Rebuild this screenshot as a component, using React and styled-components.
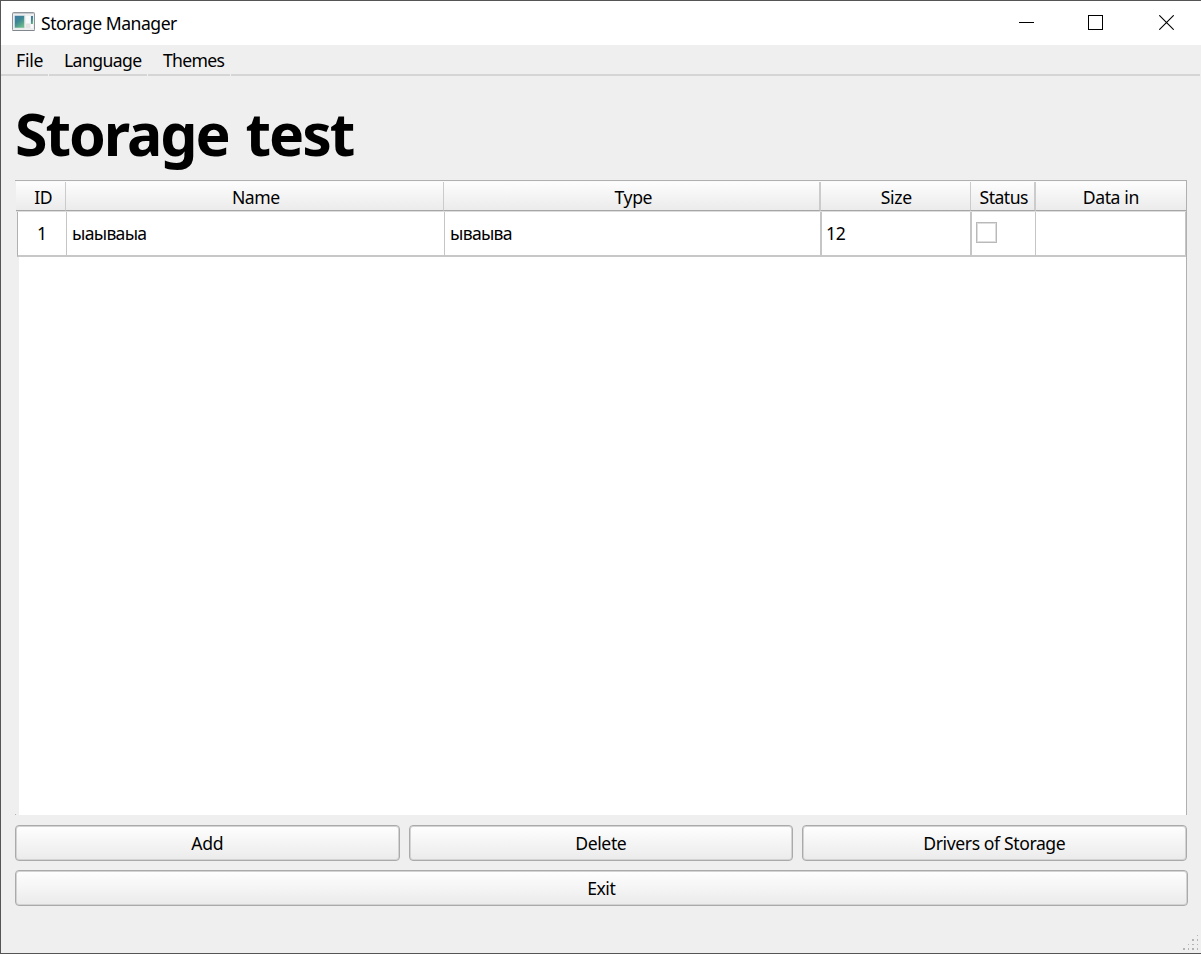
import React from 'react';
import styled, { createGlobalStyle } from 'styled-components';

const Global = createGlobalStyle`
  * { box-sizing: border-box; }
  html, body { margin: 0; background: #efefef; overflow: hidden; }
  body { font: 17.6px/24px "Noto Sans", "Open Sans", sans-serif; color: #000; }
`;

const Window = styled.div`
  width: 1201px;
  height: 954px;
  display: flex;
  flex-direction: column;
  background: #efefef;
  border: 1px solid #555;
  border-right-width: 0;
`;

const Label = styled.span`
  display: inline-block;
  white-space: nowrap;
  letter-spacing: ${(p) => p.$track || 0}px;
  margin-right: ${(p) => -(p.$track || 0)}px;
`;

const TitleBar = styled.header`
  height: 44px;
  flex: none;
  display: flex;
  align-items: flex-start;
  padding: 10px 27px 0 11px;
  background: #fff;
`;

const Caption = styled.div`
  flex: 1;
  padding-left: 6px;
`;

const Controls = styled.div`
  display: flex;
  gap: 54px;
  padding-top: 4px;
  svg { display: block; }
  svg:last-child { margin-left: 2px; }
`;

const MenuBar = styled.nav`
  display: flex;
  flex: none;
  height: 31px;
  gap: 1px;
  margin-right: 1px;
`;

const MenuItem = styled.div`
  width: ${(p) => p.$w}px;
  flex: ${(p) => (p.$w ? 'none' : 1)};
  padding: 3px 0 0 ${(p) => p.$pad || 0}px;
  border-bottom: 2px solid #d5d5d5;
`;

const Content = styled.main`
  width: 1173px;
  margin-left: 14px;
  display: flex;
  flex-direction: column;
`;

const Heading = styled.h1`
  height: 104px;
  margin: 0;
  padding-top: 17px;
  font-size: 59px;
  line-height: 80px;
  font-weight: 700;
  word-spacing: 3.5px;
`;

const Table = styled.section`
  width: 1172px;
  height: 635px;
  border-top: 1px solid #b0b0b0;
  border-right: 1px solid #b0b0b0;
`;

const HeaderRow = styled.div`
  display: flex;
  height: 31px;
  padding-top: 1px;
  margin-left: 1px;
  border-bottom: 1px solid #ddd;
  background: #fafafa;
`;

const HeaderCell = styled.div`
  width: ${(p) => p.$w}px;
  padding-top: 3px;
  padding-left: ${(p) => p.$shift || 0}px;
  text-align: center;
  border-right: ${(p) => p.$line}px solid #cbcbcb;
  border-bottom: 1px solid #a6a6a6;
  background: linear-gradient(#fdfdfd, #ebebeb);
`;

const Row = styled.div`
  display: flex;
  height: 45px;
  margin-left: 2px;
  border-left: 1px solid #b0b0b0;
  border-bottom: 2px solid #c7c7c7;
  background: #fff;
`;

const Cell = styled.div`
  width: ${(p) => p.$w}px;
  padding: ${(p) => p.$top || 9}px 0 0 ${(p) => p.$pad || 0}px;
  border-right: ${(p) => p.$line}px solid #c5c5c5;
`;

const Check = styled.div`
  width: 21px;
  height: 21px;
  border: 1px solid #b9b9b9;
  box-shadow: inset 0 0 0 1px #dedede;
  background: #fff;
`;

const Body = styled.div`
  display: flex;
  align-items: flex-end;
  height: 558px;
`;

const FrameCorner = styled.div`
  width: 1px;
  height: 1px;
  margin-right: 3px;
  background: #b0b0b0;
`;

const Empty = styled.div`
  flex: 1;
  height: 100%;
  background: #fff;
`;

const Buttons = styled.div`
  display: grid;
  grid-template-columns: 385px 384px 385px;
  grid-auto-rows: 36px;
  column-gap: 9px;
  row-gap: 9px;
  margin-top: 10px;
`;

const Button = styled.button`
  grid-column: ${(p) => (p.$wide ? '1 / -1' : 'auto')};
  width: ${(p) => (p.$wide ? '1173px' : 'auto')};
  padding: 0;
  font: inherit;
  color: inherit;
  border: 1px solid #aaa;
  border-radius: 4px;
  box-shadow: inset 0 0 0 1px #d3d3d3;
  background: linear-gradient(#fefefe, #ebebeb);
`;

const Footer = styled.footer`
  flex: 1;
  display: flex;
  justify-content: flex-end;
  align-items: flex-end;
  padding: 0 3px 3px 0;
  svg { display: block; }
`;

const AppIcon = () => (
  <svg width="23" height="21" viewBox="0 -1 23 21">
    <defs>
      <linearGradient id="pane" x1="0" y1="0" x2=".6" y2="1">
        <stop offset="0" stopColor="#3f79a8" />
        <stop offset=".5" stopColor="#3d8794" />
        <stop offset="1" stopColor="#6ab98a" />
      </linearGradient>
    </defs>
    <rect x=".5" y=".5" width="22" height="18" rx="1" fill="#eceef0" stroke="#8e9499" />
    <path d="M1 1.5h21" stroke="#c5cacf" />
    <rect x="2.5" y="3.5" width="10" height="12.5" fill="url(#pane)" stroke="#dfe6e8" strokeWidth=".6" />
    <rect x="14" y="4" width="4" height="7" fill="#fafafa" />
    <rect x="14" y="12" width="4" height="4" fill="#e3e3e3" />
    <rect x="19" y="4" width="2" height="8" fill="url(#pane)" />
    <rect x="19" y="12" width="2" height="4" fill="#fafafa" />
    <path d="M.5 18.5h22" stroke="#81878c" />
  </svg>
);

const columns = [
  { name: 'ID', w: 50, line: 1, shift: 6, track: -0.5 },
  { name: 'Name', w: 378, line: 1, shift: 3, track: -0.5 },
  { name: 'Type', w: 377, line: 2, shift: 4, track: -0.4 },
  { name: 'Size', w: 150, line: 1, shift: 2, track: -0.3 },
  { name: 'Status', w: 65, line: 2, shift: 3, track: -0.5 },
  { name: 'Data in', w: 150, line: 0, shift: 0, track: -0.4 },
];

const dots = [[14, 0, 1, 1], [9, 4, 2, 2], [14, 4, 1, 2], [5, 9, 1, 1], [9, 9, 2, 1], [14, 9, 1, 1], [0, 13, 2, 2], [5, 13, 1, 2], [9, 13, 2, 2], [14, 13, 1, 2]];

export default function App() {
  return (
    <Window>
      <Global />
      <TitleBar>
        <AppIcon />
        <Caption><Label $track={-0.5}>Storage Manager</Label></Caption>
        <Controls>
          <svg width="15" height="15"><path d="M0 7.5h15" stroke="#000" /></svg>
          <svg width="15" height="15"><rect x=".5" y=".5" width="14" height="14" fill="none" stroke="#000" /></svg>
          <svg width="15" height="15"><path d="M.3.3 14.7 14.7M14.7.3.3 14.7" stroke="#000" strokeWidth="1.1" /></svg>
        </Controls>
      </TitleBar>
      <MenuBar>
        <MenuItem $w={47} $pad={15}><Label $track={-0.2}>File</Label></MenuItem>
        <MenuItem $w={98} $pad={15}><Label $track={-0.6}>Language</Label></MenuItem>
        <MenuItem $w={82} $pad={15}><Label $track={-0.7}>Themes</Label></MenuItem>
        <MenuItem />
      </MenuBar>
      <Content>
        <Heading><Label $track={-2.05}>Storage test</Label></Heading>
        <Table>
          <HeaderRow>
            {columns.map((c) => (
              <HeaderCell key={c.name} $w={c.w} $line={c.line} $shift={c.shift}>
                <Label $track={c.track}>{c.name}</Label>
              </HeaderCell>
            ))}
          </HeaderRow>
          <Row>
            <Cell $w={49} $line={1} $pad={19}>1</Cell>
            <Cell $w={378} $line={1} $pad={5}><Label $track={-0.7}>ыаываыа</Label></Cell>
            <Cell $w={377} $line={2} $pad={5}><Label $track={-0.7}>ываыва</Label></Cell>
            <Cell $w={150} $line={2} $pad={4}><Label $track={-0.4}>12</Label></Cell>
            <Cell $w={64} $line={1} $pad={4} $top={10}><Check /></Cell>
            <Cell $w={150} $line={1} />
          </Row>
          <Body>
            <FrameCorner />
            <Empty />
          </Body>
        </Table>
        <Buttons>
          <Button><Label $track={-0.3}>Add</Label></Button>
          <Button><Label $track={-0.4}>Delete</Label></Button>
          <Button><Label $track={-0.4}>Drivers of Storage</Label></Button>
          <Button $wide><Label $track={-0.5}>Exit</Label></Button>
        </Buttons>
      </Content>
      <Footer>
        <svg width="15" height="15">
          {dots.map(([x, y, w, h]) => <rect key={`${x}-${y}`} x={x} y={y} width={w} height={h} fill="#b4b4b4" />)}
        </svg>
      </Footer>
    </Window>
  );
}
